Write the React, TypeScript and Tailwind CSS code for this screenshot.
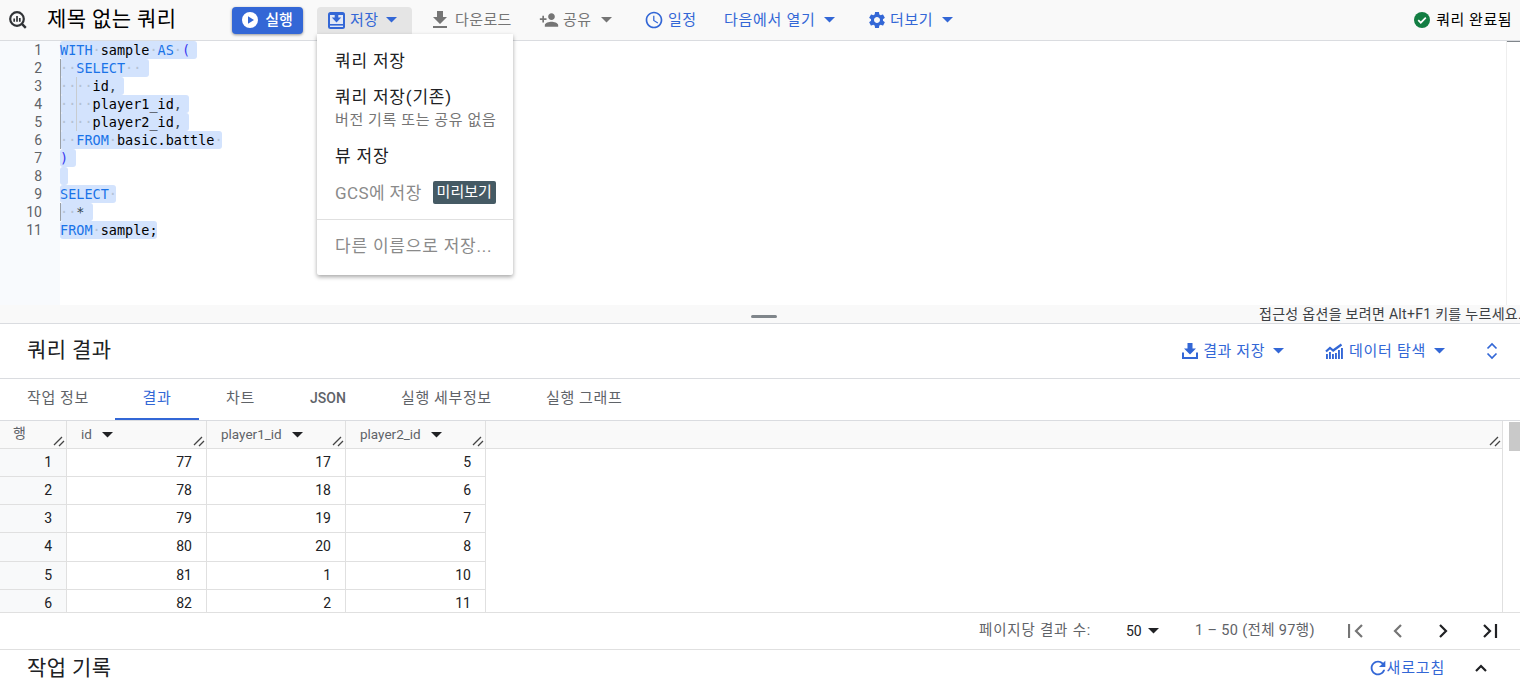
const FONT = "font-['Roboto','Noto_Sans_CJK_KR',sans-serif]";

function Caret({ c = "#3367d6", className = "" }: { c?: string; className?: string }) {
  return (
    <svg width="11" height="6" viewBox="0 0 11 6" className={className}>
      <path d="M0 0h11L5.5 5.5z" fill={c} />
    </svg>
  );
}
function Mi({ d, c, s = 20, className = "" }: { d: string; c: string; s?: number; className?: string }) {
  return (
    <svg width={s} height={s} viewBox="0 0 24 24" className={className}>
      <path d={d} fill={c} />
    </svg>
  );
}
const DL = "M19 9h-4V3H9v6H5l7 7 7-7zM5 18v2h14v-2H5z";
const PERSON = "M15 12c2.21 0 4-1.79 4-4s-1.79-4-4-4-4 1.79-4 4 1.79 4 4 4zm-9-2V7H4v3H1v2h3v3h2v-3h3v-2H6zm9 4c-2.67 0-8 1.34-8 4v2h16v-2c0-2.66-5.33-4-8-4z";
const CLOCK = "M11.99 2C6.47 2 2 6.48 2 12s4.47 10 9.99 10C17.52 22 22 17.52 22 12S17.52 2 11.99 2zM12 20c-4.42 0-8-3.58-8-8s3.58-8 8-8 8 3.58 8 8-3.58 8-8 8zm.5-13H11v6l5.25 3.15.75-1.23-4.5-2.67z";
const GEAR = "M19.14 12.94c.04-.3.06-.61.06-.94 0-.32-.02-.64-.07-.94l2.03-1.58c.18-.14.23-.41.12-.61l-1.92-3.32c-.12-.22-.37-.29-.59-.22l-2.39.96c-.5-.38-1.03-.7-1.62-.94l-.36-2.54c-.04-.24-.24-.41-.48-.41h-3.84c-.24 0-.43.17-.47.41l-.36 2.54c-.59.24-1.13.57-1.62.94l-2.39-.96c-.22-.08-.47 0-.59.22L2.74 8.87c-.12.21-.08.47.12.61l2.03 1.58c-.05.3-.09.63-.09.94s.02.64.07.94l-2.03 1.58c-.18.14-.23.41-.12.61l1.92 3.32c.12.22.37.29.59.22l2.39-.96c.5.38 1.03.7 1.62.94l.36 2.54c.05.24.24.41.48.41h3.84c.24 0 .44-.17.47-.41l.36-2.54c.59-.24 1.13-.56 1.62-.94l2.39.96c.22.08.47 0 .59-.22l1.92-3.32c.12-.22.07-.47-.12-.61l-2.01-1.58zM12 15.6c-1.98 0-3.6-1.62-3.6-3.6s1.62-3.6 3.6-3.6 3.6 1.62 3.6 3.6-1.62 3.6-3.6 3.6z";
const REFRESH = "M17.65 6.35C16.2 4.9 14.21 4 12 4c-4.42 0-7.99 3.58-7.99 8s3.57 8 7.99 8c3.73 0 6.84-2.55 7.73-6h-2.08c-.82 2.33-3.04 4-5.65 4-3.31 0-6-2.69-6-6s2.69-6 6-6c1.66 0 3.14.69 4.22 1.78L13 11h7V4l-2.35 2.35z";

function Logo() {
  return (
    <svg width="20" height="20" viewBox="0 0 20 20" fill="none">
      <circle cx="9" cy="9" r="6.8" stroke="#303336" strokeWidth="2.2" />
      <path d="M6.2 8.5v3.2M9 6v5.7M11.8 8v3.7" stroke="#303336" strokeWidth="1.7" />
      <path d="M13.6 13.6l4.2 4.2" stroke="#303336" strokeWidth="2.4" />
    </svg>
  );
}

const K = ({ children }: { children: string }) => <span className="text-[#1a73e8]">{children}</span>;
const D = ({ n = 1 }: { n?: number }) => <span className="text-[#b4c2d4]">{"·".repeat(n)}</span>;

const lines: { w: number; node: React.ReactNode; guide?: boolean; guide2?: boolean }[] = [
  { w: 137, node: <><K>WITH</K><D />sample<D /><K>AS</K><D /><span className="text-[#3a3af0]">(</span></> },
  { w: 89, guide: true, node: <><D n={2} /><K>SELECT</K><D n={2} /></> },
  { w: 64, guide: true, guide2: true, node: <><D n={4} />id<span className="text-[#37474f]">,</span></> },
  { w: 129, guide: true, guide2: true, node: <><D n={4} />player1_id<span className="text-[#37474f]">,</span></> },
  { w: 129, guide: true, guide2: true, node: <><D n={4} />player2_id<span className="text-[#37474f]">,</span></> },
  { w: 162, guide: true, node: <><D n={2} /><K>FROM</K><D />basic.battle<D /></> },
  { w: 16, node: <span className="text-[#3a3af0]">)</span> },
  { w: 8, node: <></> },
  { w: 56, node: <><K>SELECT</K><D /></> },
  { w: 33, guide: true, node: <><D n={2} /><span className="text-[#37474f]">*</span></> },
  { w: 97, node: <><K>FROM</K><D />sample;</> },
];

const rows = [
  [1, 77, 17, 5],
  [2, 78, 18, 6],
  [3, 79, 19, 7],
  [4, 80, 20, 8],
  [5, 81, 1, 10],
  [6, 82, 2, 11],
];

function Grip() {
  return (
    <svg width="12" height="12" viewBox="0 0 12 12" className="absolute right-[1px] bottom-[1px]">
      <path d="M1 10l8-8M6 11l5-5" stroke="#444" strokeWidth="1.3" fill="none" />
    </svg>
  );
}

function HeadCell({ label, w }: { label: string; w: string }) {
  return (
    <div className={`relative flex items-start gap-[10px] border-r border-[#e0e0e0] pl-[14px] pt-[3px] text-[13.5px] text-[#5f6368] ${w}`}>
      <span>{label}</span>
      <Caret c="#202124" className="mt-[8px]" />
      <Grip />
    </div>
  );
}

function TopBtn({ icon, label, color, caret, className = "" }: { icon?: React.ReactNode; label: string; color: string; caret?: boolean; className?: string }) {
  return (
    <div className={`flex items-center text-[15px] ${className}`} style={{ color }}>
      {icon}
      <span>{label}</span>
      {caret && <Caret c={color} className="ml-[9px]" />}
    </div>
  );
}

export default function App() {
  return (
    <div className={`${FONT} relative flex h-[686px] w-[1520px] flex-col overflow-hidden bg-white`}>
      {/* toolbar */}
      <div className="flex h-[41px] shrink-0 items-center border-b border-[#dadce0] bg-[#f9f9f9]">
        <div className="ml-[8px]"><Logo /></div>
        <div className="ml-[19px] w-[185px] text-[21px] tracking-[0.4px] text-black">제목 없는 쿼리</div>
        <div className="flex h-[27px] w-[71px] items-center justify-center gap-[7px] rounded-[4px] bg-[#3367d6] text-[15px] font-medium text-white shadow-[0_1px_3px_rgba(0,0,0,0.4)]">
          <svg width="16" height="16" viewBox="0 0 16 16"><circle cx="8" cy="8" r="8" fill="#fff" /><path d="M6 4.2v7.6L12 8z" fill="#3367d6" /></svg>
          <span>실행</span>
        </div>
        <div className="ml-[14px] flex h-[27px] w-[95px] items-center rounded-t-[4px] bg-[#e5e5e5] pl-[11px] text-[15px] tracking-[0.4px] text-[#3367d6]">
          <svg width="17" height="17" viewBox="0 0 17 17" className="mr-[5px]">
            <rect width="17" height="17" rx="2.5" fill="#3367d6" />
            <rect x="2" y="3" width="13" height="12" fill="#e3e9f6" />
            <path d="M6.7 1h3.6v4.5h2.9L8.5 10.6 3.8 5.5h2.9z" fill="#3367d6" />
            <rect x="2" y="12" width="13" height="1.6" fill="#3367d6" />
          </svg>
          <span>저장</span>
          <Caret className="ml-[8px]" />
        </div>
        <TopBtn className="ml-[19px] w-[108px] tracking-[0.4px]" color="#757575" label="다운로드" icon={<Mi d={DL} c="#757575" s={24} className="-ml-[3px] mr-[3px]" />} />
        <TopBtn className="w-[105px] tracking-[0.5px]" color="#757575" label="공유" caret icon={<Mi d={PERSON} c="#757575" s={20} className="mr-[4px]" />} />
        <TopBtn className="w-[80px] tracking-[0.4px]" color="#3367d6" label="일정" icon={<Mi d={CLOCK} c="#3367d6" s={20} className="mr-[4px]" />} />
        <TopBtn className="w-[143px] tracking-[0.7px]" color="#3367d6" label="다음에서 열기" caret />
        <TopBtn className="tracking-[0.6px]" color="#3367d6" label="더보기" caret icon={<Mi d={GEAR} c="#3367d6" s={20} className="mr-[3px]" />} />
        <div className="ml-auto mr-[8px] flex items-center gap-[6px] text-[15px] tracking-[0.5px] text-black">
          <svg width="16" height="16" viewBox="0 0 16 16"><circle cx="8" cy="8" r="8" fill="#137e43" /><path d="M4.2 8.2l2.6 2.5 5-5" stroke="#fff" strokeWidth="1.7" fill="none" /></svg>
          <span>쿼리 완료됨</span>
        </div>
      </div>

      {/* editor */}
      <div className="flex h-[264px] shrink-0">
        <div className="w-[60px] shrink-0 bg-[#f8fafd] pr-[18px] text-right font-['Roboto',sans-serif] text-[14px] leading-[18px] text-[#5f6368]">
          {lines.map((_, i) => <div key={i} className="h-[18px]">{i + 1}</div>)}
        </div>
        <div className="flex-1 whitespace-pre font-['DejaVu_Sans_Mono',monospace] text-[13.5px] leading-[18px] text-black">
          {lines.map((l, i) => (
            <div key={i} className="relative h-[18px] rounded-[3px] bg-[#d3e3fd]" style={{ width: l.w }}>
              {l.guide && <span className="absolute left-0 top-0 h-[18px] w-px bg-[#9aa0a6]" />}
              {l.guide2 && <span className="absolute left-[16px] top-0 h-[18px] w-px bg-[#c8ccd0]" />}
              <span className="relative z-10">{l.node}</span>
            </div>
          ))}
        </div>
        <div className="relative w-[14px] shrink-0 border-l border-[#eeeeee]">
          <div className="h-[1px] w-full bg-[#80868b]" />
        </div>
      </div>

      {/* resize strip */}
      <div className="relative flex h-[19px] shrink-0 items-center justify-center border-b border-[#dadce0] bg-[#f9f9f9]">
        <div className="ml-[8px] mt-[5px] h-[3px] w-[26px] rounded-full bg-[#80868b]" />
        <div className="absolute left-[1259px] top-0 whitespace-nowrap text-[14px] leading-[18px] tracking-[0.3px] text-[#3c4043]">접근성 옵션을 보려면 Alt+F1 키를 누르세요.</div>
      </div>

      {/* results header */}
      <div className="flex h-[55px] shrink-0 items-center border-b border-[#dadce0]">
        <div className="ml-[27px] text-[21px] tracking-[0.4px] text-[#202124]">쿼리 결과</div>
        <div className="ml-auto flex items-center text-[15px] text-[#3367d6]">
          <svg width="16" height="16" viewBox="0 0 16 16" className="mr-[5px]">
            <path d="M5.5 0h5v5.5H14L8 11.5 2 5.5h3.5z" fill="#3367d6" />
            <path d="M0 9.5h2V14h12V9.5h2V16H0z" fill="#3367d6" />
          </svg>
          <span className="tracking-[0.6px]">결과 저장</span>
          <Caret className="ml-[8px]" />
          <svg width="18" height="18" viewBox="0 0 18 18" className="ml-[41px] mr-[6px]">
            <path d="M1 17v-5h1.9v5zM4 17v-7h1.9v7zM7 17v-5h1.9v5zM10 17v-6h1.9v6zM13 17V8h1.9v9zM16 17V6h1.9v11z" fill="#3367d6" />
            <path d="M1 9.5l4-3.5 3.2 2.5L16.5 2.5" stroke="#3367d6" strokeWidth="2.2" fill="none" />
          </svg>
          <span className="tracking-[0.7px]">데이터 탐색</span>
          <Caret className="ml-[8px]" />
          <svg width="12" height="18" viewBox="0 0 12 18" className="ml-[41px] mr-[22px]" fill="none" stroke="#3367d6" strokeWidth="1.7">
            <path d="M1.5 6.5L6 2l4.5 4.5M1.5 11.5L6 16l4.5-4.5" />
          </svg>
        </div>
      </div>

      {/* tabs */}
      <div className="flex h-[42px] shrink-0 border-b border-[#dadce0] text-[15px] tracking-[0.6px] text-[#5f6368]">
        <div className="ml-[27px] w-[88px] pt-[8px]">작업 정보</div>
        <div className="h-[41px] w-[84px] border-b-2 border-[#3367d6] pt-[8px] text-center text-[#3367d6]">결과</div>
        <div className="ml-[27px] w-[84px] pt-[8px]">차트</div>
        <div className="w-[91px] pt-[9px] text-[14px] font-medium tracking-normal">JSON</div>
        <div className="w-[145px] pt-[8px]">실행 세부정보</div>
        <div className="pt-[8px]">실행 그래프</div>
      </div>

      {/* table */}
      <div className="flex h-[191px] shrink-0 overflow-hidden">
        <div className="flex-1 border-r border-[#e0e0e0]">
          <div className="flex h-[28px] border-b border-[#e0e0e0] bg-[#f9f9f9]">
            <div className="relative w-[67px] border-r border-[#e0e0e0] pl-[13px] pt-[2px] text-[14px] text-[#5f6368]">행<Grip /></div>
            <HeadCell label="id" w="w-[140px]" />
            <HeadCell label="player1_id" w="w-[139px]" />
            <HeadCell label="player2_id" w="w-[140px]" />
            <div className="relative flex-1"><Grip /></div>
          </div>
          {rows.map((r) => (
            <div key={r[0]} className={`flex text-[14px] leading-[27px] text-[#202124] ${r[0] === 4 ? "h-[29px]" : "h-[28px]"}`}>
              <div className="w-[67px] border-b border-r border-[#e0e0e0] bg-[#f8f9fa] pr-[14px] text-right">{r[0]}</div>
              <div className="w-[140px] border-b border-r border-[#e0e0e0] pr-[14px] text-right">{r[1]}</div>
              <div className="w-[139px] border-b border-r border-[#e0e0e0] pr-[14px] text-right">{r[2]}</div>
              <div className="w-[140px] border-b border-r border-[#e0e0e0] pr-[14px] text-right">{r[3]}</div>
            </div>
          ))}
        </div>
        <div className="w-[17px] shrink-0 pl-[6px] pt-[1px]">
          <div className="h-[29px] w-[11px] bg-[#c9c9c9]" />
        </div>
      </div>

      {/* pager */}
      <div className="flex h-[38px] shrink-0 items-center border-y border-[#e0e0e0] text-[14.5px] tracking-[0.35px] text-[#5f6368]">
        <div className="ml-[979px] w-[147px] tracking-[0.8px]">페이지당 결과 수:</div>
        <div className="flex w-[69px] items-center gap-[5px] text-[14px] tracking-normal text-[#202124]">50<Caret c="#202124" className="w-[13px]" /></div>
        <div className="w-[153px]">1 – 50 (전체 97행)</div>
        <svg width="150" height="18" viewBox="0 0 150 18" fill="none" strokeWidth="2.2">
          <path d="M1 2v14" stroke="#757575" />
          <path d="M14 3L8 9l6 6" stroke="#757575" />
          <path d="M53 3l-6 6 6 6" stroke="#757575" />
          <path d="M92 3l6 6-6 6" stroke="#202124" />
          <path d="M136 3l6 6-6 6M148 2v14" stroke="#202124" />
        </svg>
      </div>

      {/* job history */}
      <div className="flex flex-1 items-center">
        <div className="ml-[27px] mt-[2px] text-[21px] tracking-[0.4px] text-[#202124]">작업 기록</div>
        <div className="ml-auto flex items-center text-[15px] tracking-[0.8px] text-[#3367d6]">
          <Mi d={REFRESH} c="#3367d6" s={22} className="-mr-[2px]" />
          <span>새로고침</span>
          <svg width="14" height="10" viewBox="0 0 14 10" fill="none" stroke="#202124" strokeWidth="2.2" className="ml-[29px] mr-[32px]">
            <path d="M2 8l5-5 5 5" />
          </svg>
        </div>
      </div>

      {/* save dropdown */}
      <div className="absolute left-[317px] top-[34px] h-[241px] w-[196px] rounded-b-[2px] bg-white text-[17px] tracking-[0.8px] text-[#202124] shadow-[0_2px_4px_rgba(0,0,0,0.35)]">
        <div className="pl-[18px] pt-[16px] leading-[22px]">쿼리 저장</div>
        <div className="pl-[18px] pt-[14px] leading-[22px]">쿼리 저장(기존)</div>
        <div className="pl-[18px] pt-[2px] text-[15px] leading-[20px] tracking-[0.6px] text-[#757575]">버전 기록 또는 공유 없음</div>
        <div className="pl-[18px] pt-[15px] leading-[22px]">뷰 저장</div>
        <div className="flex items-center pl-[18px] pt-[14px] text-[#8a8a8a]">
          <span className="leading-[23px] tracking-[0.4px]">GCS에 저장</span>
          <span className="mb-[2px] ml-[11px] flex h-[23px] w-[63px] items-center justify-center rounded-[2px] bg-[#455a64] text-[15px] tracking-normal text-white">미리보기</span>
        </div>
        <div className="mt-[13px] border-t border-[#e0e0e0] pl-[18px] pt-[15px] leading-[22px] text-[#8a8a8a]">다른 이름으로 저장...</div>
      </div>
    </div>
  );
}
